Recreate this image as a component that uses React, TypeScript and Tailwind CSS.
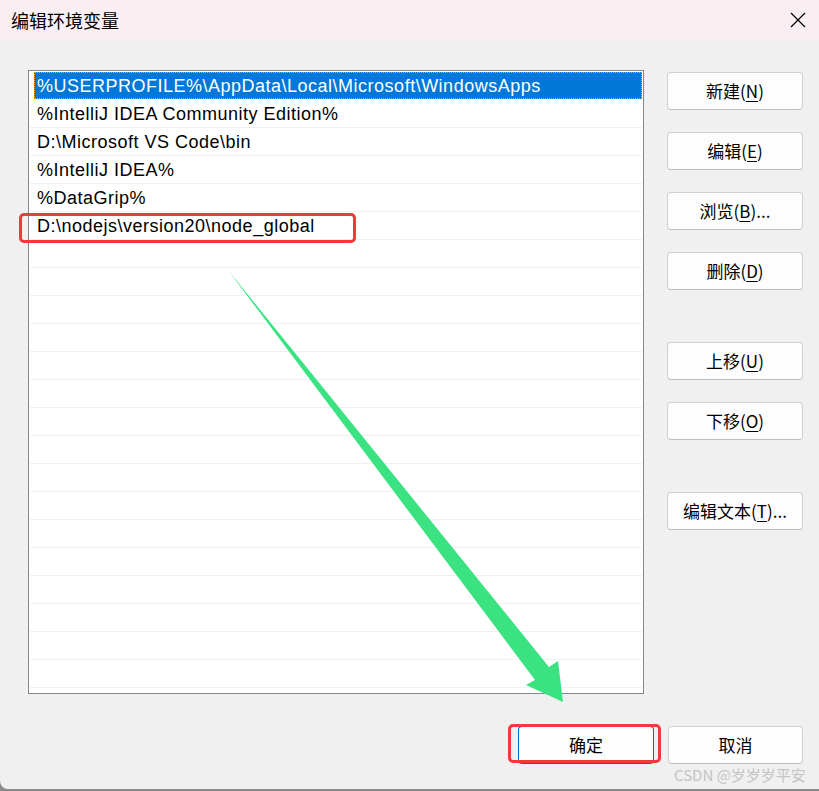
import React from 'react'

const paths = [
  '%USERPROFILE%\\AppData\\Local\\Microsoft\\WindowsApps',
  '%IntelliJ IDEA Community Edition%',
  'D:\\Microsoft VS Code\\bin',
  '%IntelliJ IDEA%',
  '%DataGrip%',
  'D:\\nodejs\\version20\\node_global',
]

const sideButtons = [
  { label: '新建', key: 'N', tail: '', gap: 'mt-[2px]' },
  { label: '编辑', key: 'E', tail: '', gap: 'mt-[22px]' },
  { label: '浏览', key: 'B', tail: '...', gap: 'mt-[22px]' },
  { label: '删除', key: 'D', tail: '', gap: 'mt-[22px]' },
  { label: '上移', key: 'U', tail: '', gap: 'mt-[52px]' },
  { label: '下移', key: 'O', tail: '', gap: 'mt-[22px]' },
  { label: '编辑文本', key: 'T', tail: '...', gap: 'mt-[52px]' },
]

function WinButton({ children, className = '' }: { children: React.ReactNode; className?: string }) {
  return (
    <div
      className={`h-[38px] flex items-center justify-center rounded-[4px] bg-[#fdfdfd] text-[17px] text-black ${className}`}
    >
      {children}
    </div>
  )
}

export default function App() {
  const rows = Array.from({ length: 22 }, (_, i) => paths[i] ?? '')

  return (
    <div className="relative w-[819px] h-[791px] bg-[#8a8a8a] overflow-hidden font-['Noto_Sans_CJK_SC',sans-serif]">
      <div className="h-[789px] bg-[#f0f0f0] rounded-bl-[8px] rounded-tl-[6px] flex flex-col">
        {/* Title bar */}
        <div className="h-[40px] bg-[#f9eef2] flex items-center justify-between pl-[11px] pr-[13px] shrink-0">
          <span className="text-[18px] text-black">编辑环境变量</span>
          <svg width="16" height="16" viewBox="0 0 16 16" className="text-black">
            <path d="M1 1 L15 15 M15 1 L1 15" stroke="currentColor" strokeWidth="1.2" fill="none" />
          </svg>
        </div>

        {/* Body */}
        <div className="flex pl-[28px] pt-[30px]">
          {/* List box */}
          <div className="w-[616px] h-[624px] border border-[#828790] bg-white pt-px px-px overflow-hidden">
            {rows.map((text, i) => (
              <div key={i} className="h-[28px] border-b border-[#f0f0f0] flex">
                {i === 0 ? (
                  <div className="ml-[4px] flex-1 h-[27px] bg-[#0078d7] outline-1 outline-dotted outline-[#f0a030] -outline-offset-1 flex items-center pl-[3px] pt-px text-white text-[18px] tracking-[0.5px] font-['Liberation_Sans',sans-serif] whitespace-nowrap">
                    {text}
                  </div>
                ) : (
                  <div className="flex-1 flex items-center pl-[7px] pt-px text-black text-[18px] tracking-[0.5px] font-['Liberation_Sans',sans-serif] whitespace-nowrap">
                    {text}
                  </div>
                )}
              </div>
            ))}
          </div>

          {/* Side buttons */}
          <div className="ml-[23px] w-[136px] flex flex-col">
            {sideButtons.map((b) => (
              <WinButton key={b.label} className={`${b.gap} border border-[#d0d0d0] border-b-[#bdbdbd]`}>
                <span>
                  {b.label}(<span className="underline underline-offset-[3px] decoration-1">{b.key}</span>){b.tail}
                </span>
              </WinButton>
            ))}
          </div>
        </div>

        {/* Bottom buttons */}
        <div className="flex justify-end gap-[14px] pr-[16px] mt-[32px]">
          <WinButton className="w-[136px] border border-[#0067c0] border-b-2">
            <span>确定</span>
          </WinButton>
          <WinButton className="w-[135px] border border-[#d0d0d0] border-b-[#bdbdbd]">
            <span>取消</span>
          </WinButton>
        </div>
      </div>

      {/* Annotations */}
      <div className="absolute left-[19px] top-[213px] w-[337px] h-[30px] border-[3px] border-[#f0393b] rounded-[5px] pointer-events-none" />
      <div className="absolute left-[508px] top-[724px] w-[153px] h-[39px] border-[3px] border-[#f0393b] rounded-[5px] pointer-events-none" />
      <svg className="absolute left-0 top-0 pointer-events-none" width="819" height="791">
        <polygon points="228,270 549,667 558,661 563,702 526,685 535,680" fill="#3ae281" />
      </svg>

      {/* Watermark */}
      <div className="absolute left-[674px] top-[764px] text-[15px] text-[#c4c4c4] whitespace-nowrap pointer-events-none">
        CSDN @岁岁岁平安
      </div>
    </div>
  )
}
